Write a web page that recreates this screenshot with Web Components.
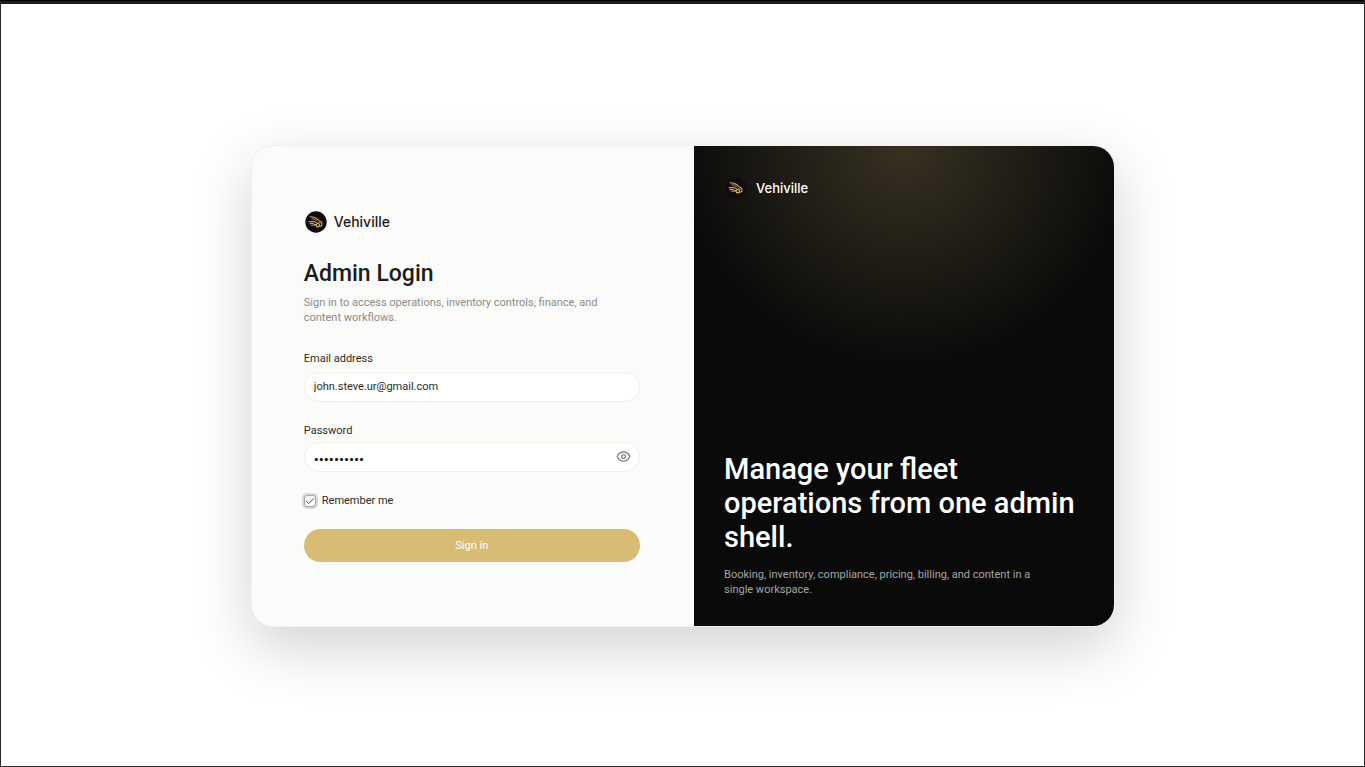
<!DOCTYPE html>
<html lang="en">
<head>
<meta charset="UTF-8">
<meta name="viewport" content="width=device-width, initial-scale=1">
<title>Vehiville Admin Login</title>
<style>
  body {
    margin: 0;
    font-family: Roboto, Inter, sans-serif;
    color: #1c1c1c;
    background: #ffffff;
  }
</style>
</head>
<body>
<page-shell>
  <auth-card>
    <login-form slot="form"></login-form>
    <promo-panel slot="promo">
      <span slot="title">Manage your fleet operations from one admin shell.</span>
      <span slot="text">Booking, inventory, compliance, pricing, billing, and content in a single workspace.</span>
    </promo-panel>
  </auth-card>
</page-shell>

<script>
class PageShell extends HTMLElement {
  connectedCallback() {
    this.attachShadow({ mode: "open" });
    this.shadowRoot.innerHTML = `
      <style>
        :host {
          box-sizing: border-box;
          min-height: 100vh;
          display: flex;
          flex-direction: column;
          border: 1px solid #29292b;
          border-top-color: #000000;
        }

        .top-bar {
          height: 3px;
          background: #1d1c1f;
        }

        main {
          flex: 1;
          display: flex;
          align-items: center;
          justify-content: center;
          padding: 25px 24px 24px;
        }
      </style>
      <div class="top-bar"></div>
      <main><slot></slot></main>
    `;
  }
}

class AuthCard extends HTMLElement {
  connectedCallback() {
    this.attachShadow({ mode: "open" });
    this.shadowRoot.innerHTML = `
      <style>
        :host {
          box-sizing: border-box;
          width: 100%;
          max-width: 864px;
          min-height: 482px;
          display: grid;
          grid-template-columns: 1.055fr 1fr;
          overflow: hidden;
          border: 1px solid #f0f0ec;
          border-radius: 22px;
          background: #fbfbf9;
          box-shadow: 0 20px 60px rgba(0, 0, 0, .18);
        }

        @media (max-width: 720px) {
          :host {
            grid-template-columns: 1fr;
          }
        }
      </style>
      <slot name="form"></slot>
      <slot name="promo"></slot>
    `;
  }
}

class BrandMark extends HTMLElement {
  connectedCallback() {
    this.attachShadow({ mode: "open" });
    this.shadowRoot.innerHTML = `
      <style>
        :host {
          display: flex;
          align-items: center;
          gap: 6px;
          font-family: Inter, sans-serif;
          font-size: 14px;
          line-height: 22px;
          font-weight: 500;
        }

        :host([compact]) {
          gap: 8px;
          font-size: 13px;
        }

        svg {
          width: 24px;
          height: 22px;
          flex-shrink: 0;
        }
      </style>
      <svg viewBox="0 0 24 22" fill="none" aria-hidden="true">
        <circle cx="12" cy="11" r="10.7" fill="#120a12"/>
        <g stroke="#c9a557" stroke-width="1.1" stroke-linecap="round" stroke-linejoin="round">
          <path d="M6 5.8 10 6.2l3.4 1.9 2.4 2.2 2 .8.2 3.2-1.5 1"/>
          <path d="M8 7.6 10.6 8.4l2.2 1.2" stroke="#8f7130"/>
          <path d="M5.2 10.6h4.6l2.4.9M6 12.6h2.8l1.6.9h1.8"/>
          <path d="M7.6 14.5h3.6" stroke="#8f7130"/>
          <circle cx="13.8" cy="14.2" r="1.7" stroke="#e0c56c"/>
          <path d="M14 11.2 16.4 12.2" stroke="#8f7130"/>
        </g>
      </svg>
      <span>Vehiville</span>
    `;
  }
}

class FormField extends HTMLElement {
  connectedCallback() {
    const label = this.getAttribute("label");
    const type = this.getAttribute("type");
    const value = this.getAttribute("value");

    this.attachShadow({ mode: "open" });
    this.shadowRoot.innerHTML = `
      <style>
        :host {
          display: flex;
          flex-direction: column;
          gap: 5px;
        }

        :host([type="password"]) {
          gap: 3px;
        }

        label {
          font-size: 11px;
          line-height: 16px;
          color: #2b2b2b;
        }

        .control {
          display: flex;
          align-items: center;
          box-sizing: border-box;
          height: 30px;
          padding: 0 8px 0 9px;
          border: 1px solid #f0f0e9;
          border-radius: 15px;
          background: #ffffff;
        }

        input {
          flex: 1;
          min-width: 0;
          padding: 0;
          border: 0;
          outline: none;
          background: transparent;
          font: inherit;
          font-size: 11px;
          line-height: 16px;
          color: #2b2b2b;
        }

        input[type="password"] {
          padding-top: 3px;
          font-family: Inter, sans-serif;
          font-size: 10px;
          font-weight: 600;
          color: #111111;
        }

        .control:focus-within {
          border-color: #d8bc74;
        }
      </style>
      <label for="input">${label}</label>
      <div class="control">
        <input id="input" type="${type}" value="${value}">
        <slot></slot>
      </div>
    `;

    this.addEventListener("toggle-password", () => {
      const input = this.shadowRoot.querySelector("input");
      input.type = input.type === "password" ? "text" : "password";
    });
  }
}

class PasswordToggle extends HTMLElement {
  connectedCallback() {
    this.attachShadow({ mode: "open" });
    this.shadowRoot.innerHTML = `
      <style>
        :host {
          display: flex;
        }

        button {
          display: flex;
          padding: 0;
          border: 0;
          background: transparent;
          color: #858585;
          cursor: pointer;
        }

        svg {
          width: 15px;
          height: 15px;
        }
      </style>
      <button type="button" aria-label="Show password">
        <svg viewBox="0 0 24 24" fill="none" stroke="currentColor" stroke-width="2.2" stroke-linecap="round" stroke-linejoin="round">
          <path d="M2 12s3-7.3 10-7.3S22 12 22 12s-3 7.3-10 7.3S2 12 2 12Z"/>
          <circle cx="12" cy="12" r="3"/>
        </svg>
      </button>
    `;

    this.shadowRoot.querySelector("button").addEventListener("click", () => {
      this.dispatchEvent(new CustomEvent("toggle-password", { bubbles: true }));
    });
  }
}

class CheckOption extends HTMLElement {
  connectedCallback() {
    this.attachShadow({ mode: "open" });
    this.shadowRoot.innerHTML = `
      <style>
        :host {
          display: flex;
        }

        label {
          display: flex;
          align-items: center;
          gap: 6px;
          font-size: 11px;
          line-height: 16px;
          color: #2b2b2b;
          cursor: pointer;
        }

        .box {
          display: grid;
          width: 12px;
          height: 12px;
        }

        input,
        svg {
          grid-area: 1 / 1;
          width: 12px;
          height: 12px;
        }

        input {
          appearance: none;
          box-sizing: border-box;
          margin: 0;
          border: 1px solid #a8a8a8;
          border-radius: 3px;
          background: #fbfbf9;
          box-shadow: 0 0 0 2px #d9d9d8;
        }

        svg {
          pointer-events: none;
          visibility: hidden;
        }

        input:checked + svg {
          visibility: visible;
        }
      </style>
      <label>
        <span class="box">
          <input type="checkbox" checked>
          <svg viewBox="0 0 12 12" fill="none" stroke="#4b4b4b" stroke-linecap="round" stroke-linejoin="round">
            <path d="M2.5 6.3 4.8 8.5 9.5 3.7"/>
          </svg>
        </span>
        <slot></slot>
      </label>
    `;
  }
}

class LoginForm extends HTMLElement {
  connectedCallback() {
    this.attachShadow({ mode: "open" });
    this.shadowRoot.innerHTML = `
      <style>
        :host {
          display: flex;
          align-items: center;
          justify-content: center;
          padding: 25px 26px 24px 24px;
        }

        form {
          width: 100%;
          max-width: 336px;
          display: flex;
          flex-direction: column;
        }

        h1 {
          margin: 26px 0 6px;
          font-size: 23px;
          line-height: 30px;
          font-weight: 500;
        }

        p {
          margin: 0 0 26px;
          max-width: 320px;
          font-size: 11px;
          line-height: 15px;
          color: #8b8b89;
        }

        .fields {
          display: flex;
          flex-direction: column;
          gap: 21px;
        }

        button {
          height: 33px;
          margin-top: 20px;
          border: 0;
          border-radius: 17px;
          background: #d8bc74;
          color: #ffffff;
          font: inherit;
          font-size: 11px;
          cursor: pointer;
        }
      </style>
      <form>
        <brand-mark></brand-mark>
        <h1>Admin Login</h1>
        <p>Sign in to access operations, inventory controls, finance, and content workflows.</p>
        <div class="fields">
          <form-field label="Email address" type="email" value="john.steve.ur@gmail.com"></form-field>
          <form-field label="Password" type="password" value="fleetadmin">
            <password-toggle></password-toggle>
          </form-field>
          <check-option>Remember me</check-option>
        </div>
        <button type="submit">Sign in</button>
      </form>
    `;

    this.shadowRoot.querySelector("form").addEventListener("submit", (event) => event.preventDefault());
  }
}

class PromoPanel extends HTMLElement {
  connectedCallback() {
    this.attachShadow({ mode: "open" });
    this.shadowRoot.innerHTML = `
      <style>
        :host {
          display: flex;
          flex-direction: column;
          justify-content: space-between;
          gap: 48px;
          padding: 31px 30px 29px;
          color: #ffffff;
          background:
            radial-gradient(ellipse 54% 46% at 50% 0, rgba(216, 188, 116, .22), transparent),
            #0a0a0a;
        }

        h2 {
          margin: 0 0 13px;
          font-size: 29px;
          line-height: 34px;
          font-weight: 500;
        }

        p {
          margin: 0;
          max-width: 330px;
          font-size: 11px;
          line-height: 15px;
          color: #a5a5a5;
        }
      </style>
      <brand-mark compact></brand-mark>
      <div>
        <h2><slot name="title"></slot></h2>
        <p><slot name="text"></slot></p>
      </div>
    `;
  }
}

customElements.define("page-shell", PageShell);
customElements.define("auth-card", AuthCard);
customElements.define("brand-mark", BrandMark);
customElements.define("form-field", FormField);
customElements.define("password-toggle", PasswordToggle);
customElements.define("check-option", CheckOption);
customElements.define("login-form", LoginForm);
customElements.define("promo-panel", PromoPanel);
</script>
</body>
</html>
